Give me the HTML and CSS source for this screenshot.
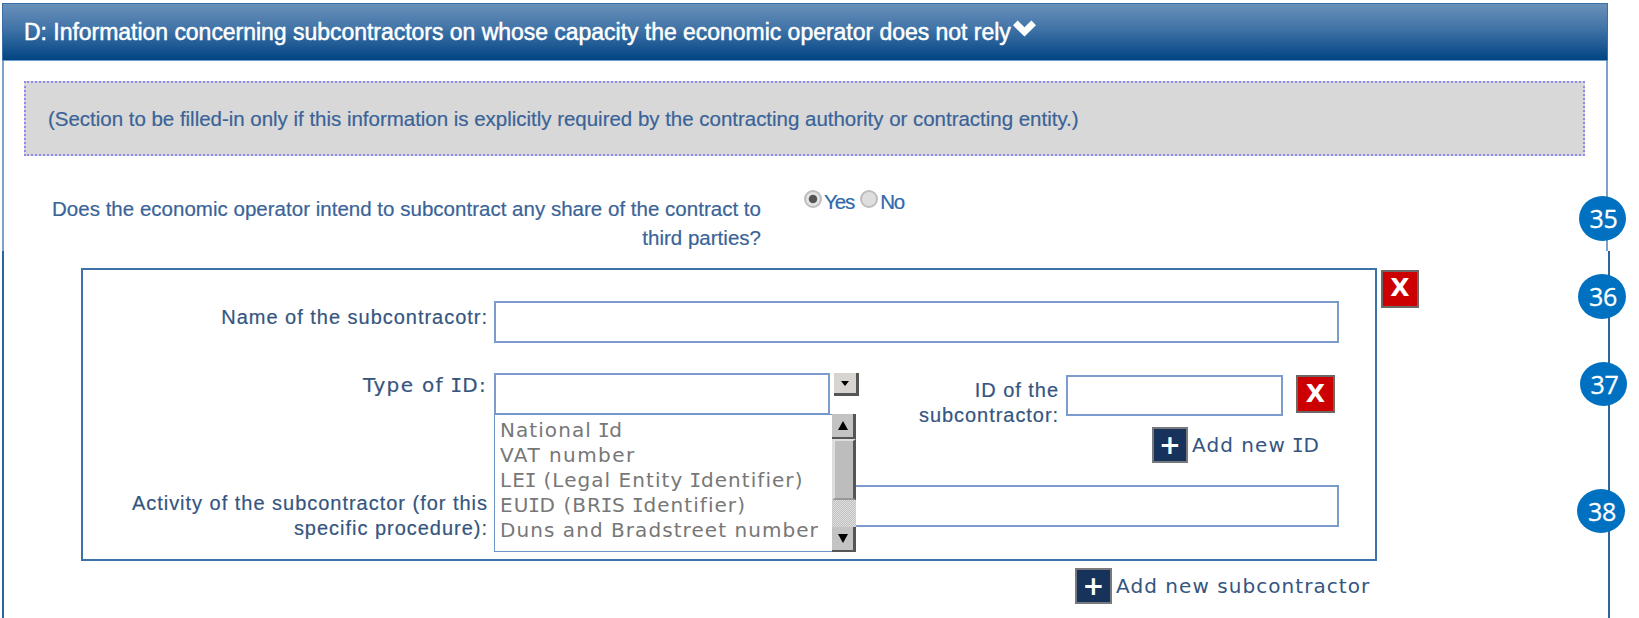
FILE: index.html
```html
<!DOCTYPE html>
<html lang="en">
<head>
<meta charset="utf-8">
<title>Subcontractors</title>
<link rel="stylesheet" href="styles.css">
</head>
<body>
<main class="page">
  <section class="intro">
    <header class="bar">
      <h1 class="title">D: Information concerning subcontractors on whose capacity the economic operator does not rely</h1>
      <svg class="chevron" viewBox="0 0 23 17"><path d="M0 5.2 4.6.6 11.5 7.2 18.4.6 23 5.2 11.5 16.6Z"/></svg>
    </header>
    <p class="notice">(Section to be filled-in only if this information is explicitly required by the contracting authority or contracting entity.)</p>
    <div class="question">
      <p class="question-text">Does the economic operator intend to subcontract any share of the contract to<br>third parties?</p>
      <div class="answers">
        <i class="radio checked"></i><span>Yes</span>
        <i class="radio second"></i><span>No</span>
      </div>
    </div>
  </section>
  <section class="details">
    <div class="row">
      <div class="card">
        <div class="line name">
          <label class="label">Name of the subcontracotr:</label>
          <div class="field"></div>
        </div>
        <div class="line type">
          <label class="label wide">Type of <b class="cap">I</b>D:</label>
          <div class="select">
            <div class="field"></div>
            <div class="arrow"><svg viewBox="0 0 8 5"><path d="M0 0h8L4 5Z"/></svg></div>
            <div class="menu">
              <ul class="options wide">
                <li>National <b class="cap">I</b>d</li>
                <li class="vat">VAT number</li>
                <li>LE<b class="cap">I</b> (Legal Entity <b class="cap">I</b>dentifier)</li>
                <li>EU<b class="cap">I</b>D (BR<b class="cap">I</b>S <b class="cap">I</b>dentifier)</li>
                <li>Duns and Bradstreet number</li>
              </ul>
              <div class="scroll">
                <div class="key"><svg viewBox="0 0 10 9"><path d="M0 9h10L5 0Z"/></svg></div>
                <div class="thumb"></div>
                <div class="track"></div>
                <div class="key"><svg viewBox="0 0 10 9"><path d="M0 0h10L5 9Z"/></svg></div>
              </div>
            </div>
          </div>
          <div class="identity">
            <div class="id-line">
              <label class="label id-label">ID of the<br>subcontractor:</label>
              <div class="field"></div>
              <button class="remove">X</button>
            </div>
            <div class="add wide"><button class="plus">+</button><span>Add new <b class="cap">I</b>D</span></div>
          </div>
        </div>
        <div class="line activity">
          <label class="label">Activity of the subcontractor (for this<br>specific procedure):</label>
          <div class="field"></div>
        </div>
      </div>
      <button class="remove">X</button>
    </div>
    <div class="add add-sub wide"><button class="plus">+</button><span>Add new subcontractor</span></div>
  </section>
  <span class="badge b35">35</span>
  <span class="badge b36">36</span>
  <span class="badge b37">37</span>
  <span class="badge b38">38</span>
</main>
</body>
</html>
```
FILE: styles.css
```css
* { box-sizing: border-box; }
body { margin: 0; background: #fff; font-family: "Liberation Sans", Arial, sans-serif; color: #3a6397; }
h1, p, ul { margin: 0; padding: 0; font-weight: normal; list-style: none; }
button { padding: 0; font-family: inherit; }
.page { position: relative; width: 1639px; height: 618px; padding: 3px 0 0 2px; overflow: hidden; }

.intro { width: 1606px; height: 248px; border: solid #7fa3c8; border-width: 0 2px; -webkit-text-stroke: 0.2px; }
.bar { display: flex; height: 58px; margin: 0 -2px; padding-left: 21px; border: 1px solid #3a6ea5; border-bottom-color: #6a9dcc; background: linear-gradient(#6990b9, #4073a7 45%, #004483); color: #fff; }
.title { font-size: 23px; line-height: 56px; letter-spacing: -0.03px; white-space: nowrap; -webkit-text-stroke: 0.5px; }
.chevron { width: 23px; height: 17px; margin: 16px 0 0 2px; fill: #fff; }
.notice { height: 75px; margin: 20px 21px 0 20px; padding-left: 22px; border: 2px dotted #8c8cf0; background: #d8d8d8; font-size: 20.5px; line-height: 72px; letter-spacing: -0.02px; white-space: nowrap; }
.question { display: flex; font-size: 20.5px; }
.question-text { width: 757px; padding-top: 39px; line-height: 28.5px; letter-spacing: 0.017px; text-align: right; white-space: nowrap; }
.answers { display: flex; padding: 33px 0 0 43px; line-height: 26px; letter-spacing: -1.1px; color: #2f68ac; }
.radio { width: 18px; height: 18px; margin: 1px 2px 0 0; border: 2px solid #bdbdbd; border-radius: 50%; background: #dedede; }
.radio.checked { background: radial-gradient(circle, #555 0 3.7px, #e4e4e4 4.7px); }
.radio.second { margin-left: 6px; }

.details { width: 1608px; height: 367px; padding: 17px 0 0 77px; border: solid #2f659e; border-width: 0 2px; color: #35557f; }
.row { display: flex; gap: 4px; }
.card { width: 1296px; height: 293px; padding-top: 31px; border: 2px solid #3d72a8; }
.line { display: flex; }
.label { width: 405px; font-size: 20px; line-height: 25px; letter-spacing: 0.98px; text-align: right; white-space: nowrap; -webkit-text-stroke: 0.2px; }
.field { border: 2px solid #7b9ccd; }
.wide { font-family: "DejaVu Sans", Verdana, sans-serif; font-size: 20px; letter-spacing: 1.06px; }
.cap { font: inherit; font-family: "DejaVu Sans Mono", monospace; margin: 0 -1.5px; }
.name { height: 72px; }
.name .field, .activity .field { width: 845px; height: 42px; margin-left: 6px; }
.name .label { padding-top: 4px; }
.type { height: 112px; }
.type .label.wide { padding-right: 1px; letter-spacing: 1.36px; }
.select { position: relative; display: flex; width: 365px; margin-left: 6px; }
.select .field { width: 336px; height: 42px; }
.arrow { width: 25px; height: 23px; margin-left: 4px; display: grid; place-items: center; background: #d8d5d0; border: solid #555; border-width: 0 3px 3px 0; }
.arrow svg { width: 8px; height: 5px; }
.menu { position: absolute; left: 0; top: 41px; display: flex; width: 362px; height: 138px; border: 1.5px solid #7095c9; background: #fff; z-index: 1; }
.options { flex: 1; padding: 3px 0 0 5px; line-height: 25px; color: #777; white-space: nowrap; }
.options .vat { letter-spacing: 1.45px; }
.scroll { width: 24px; margin: -1px; display: flex; flex-direction: column; }
.key { height: 25px; display: grid; place-items: center; background: #c3c3c3; border: solid #555; border-width: 0 3px 2px 0; }
.key svg { width: 10px; height: 9px; }
.thumb { height: 61px; border: solid; border-width: 2px 3px 2px 3px; border-color: #ddd #555 #999 #ddd; background: #bdbdbd; }
.track { flex: 1; background: repeating-conic-gradient(#c2c2c2 0 25%, #ddd 0 50%) 0 0 / 2px 2px; }
.identity { margin-left: 60px; }
.id-line { display: flex; height: 54px; padding-top: 1px; }
.id-line .id-label { width: 140px; padding-top: 4px; letter-spacing: 0.95px; }
.identity .field { width: 217px; height: 41px; margin: 1px 13px 0 7px; }
.remove { width: 39px; height: 38px; margin-top: 1px; padding-bottom: 1px; border: 2px solid #6d6866; background: #c00; color: #fff; font: bold 25px/30px "DejaVu Sans", sans-serif; }
.row > .remove { width: 38px; margin-top: 2px; padding-bottom: 2px; }
.add { display: flex; align-items: center; gap: 4px; white-space: nowrap; }
.identity .add { padding-left: 233px; }
.plus { width: 36px; height: 36px; border: 2px solid #77797d; background: #17325b; color: #fff; font: bold 26px/30px "DejaVu Sans", sans-serif; }
.activity .label { padding-top: 6px; }
.add-sub { padding: 7px 0 0 994px; }
.add-sub .plus { width: 37px; }

.badge { position: absolute; width: 48px; height: 45px; padding-left: 2px; border-radius: 50%; background: #0070c0; color: #fff; font: 25px/44px "Open Sans", sans-serif; text-align: center; letter-spacing: -0.3px; -webkit-text-stroke: 0.3px; }
.b35 { left: 1579px; top: 196px; width: 47px; }
.b36 { left: 1578px; top: 274px; }
.b37 { left: 1580px; top: 362px; width: 47px; height: 44px; }
.b38 { left: 1577px; top: 489px; height: 44px; }
```
